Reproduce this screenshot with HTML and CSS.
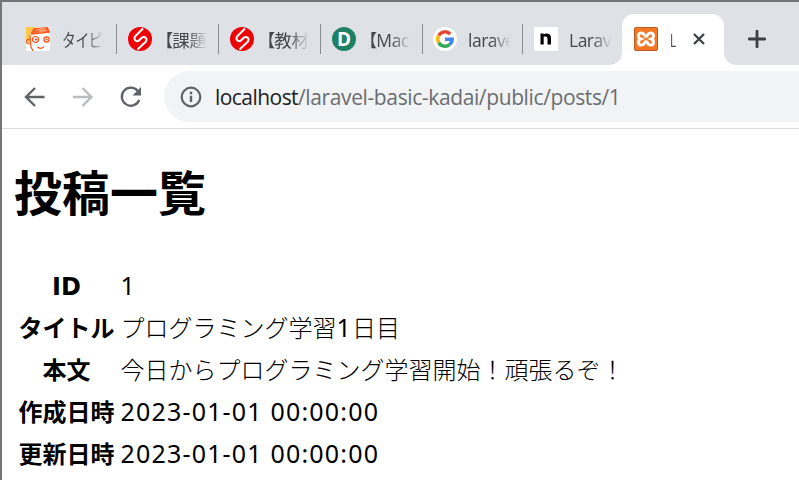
FILE: index.html
```html
<!DOCTYPE html>
<html lang="ja">
<head>
<meta charset="utf-8">
<title>Laravel</title>
<link rel="stylesheet" href="styles.css">
</head>
<body>
<div class="window">
  <div class="tabs">
    <div class="tab">
      <svg class="favicon" viewBox="0 0 24 24"><path fill="#fff" d="M0 0h24v24H0z"/><path fill="#ffc947" d="M0 0h10L4 7v9l-2-1-2 2z"/><path fill="#ff5a1f" d="M8 1 22 0l2 5-17 1-3 1z"/><path d="M10 4c4-3 9-3 10-1s-5 3-7 1M13 4l6-1" fill="none" stroke="#ffd2b8" stroke-width=".8"/><path d="M4 8 5 20l2 4M5 7l19-2M4 13c-3-2-4 1-3 3l3 1" fill="none" stroke="#ff5a1f" stroke-width="1.3"/><g fill="none" stroke="#ff4b14" stroke-width="1.2"><circle cx="9.500" cy="12.500" r="3"/><circle cx="20.500" cy="12.500" r="2.600"/><path d="M11.500 20c2 2 5 1.500 6.500-.5"/></g><g fill="#ff4b14"><circle cx="10" cy="12.500" r="1.100"/><circle cx="20.500" cy="12.500" r="1.100"/></g></svg>
      <span class="title"><span class="kana">タイピ</span></span>
    </div>
    <div class="tab">
      <svg class="favicon" viewBox="0 0 24 24"><circle cx="12" cy="12" r="12" fill="#ee0005"/><path d="M15 1.500 7.500 9c-3 3 1 7 4 4l2-2c3-3 7 1 4 4L9.500 22.500" fill="none" stroke="#fff" stroke-width="2"/></svg>
      <span class="title bracket">【課題</span>
    </div>
    <div class="tab">
      <svg class="favicon" viewBox="0 0 24 24"><circle cx="12" cy="12" r="12" fill="#ee0005"/><path d="M15 1.500 7.500 9c-3 3 1 7 4 4l2-2c3-3 7 1 4 4L9.500 22.500" fill="none" stroke="#fff" stroke-width="2"/></svg>
      <span class="title bracket">【教材</span>
    </div>
    <div class="tab">
      <span class="favicon letter-d">D</span>
      <span class="title bracket">【Mac</span>
    </div>
    <div class="tab">
      <svg class="favicon" viewBox="0 0 24 24"><circle cx="12" cy="12" r="12" fill="#fff"/><g fill="none" stroke-width="3.400"><path stroke="#ea4335" d="M5.700 8.500A7.200 7.200 0 0 1 17.200 7"/><path stroke="#fbbc05" d="M5.700 15.600a7.200 7.200 0 0 1 0-7.200"/><path stroke="#34a853" d="M16.700 17.500a7.200 7.200 0 0 1-11-1.900"/><path stroke="#4285f4" d="M12 12.200h7.200q0 3.300-2.500 5.300"/></g></svg>
      <span class="title latin">larave</span>
    </div>
    <div class="tab last">
      <svg class="favicon" viewBox="0 0 24 24"><path fill="#fff" d="M0 0h24v24H0z"/><path fill="#000" d="M6.500 6.500h3v1q1.500-1 3-1 4.500 0 4.500 4.500v6.500h-3.500v-6q0-2-2-2h-1.800v8H6.500z"/></svg>
      <span class="title latin">Larav</span>
    </div>
    <div class="tab active">
      <svg class="favicon" viewBox="0 0 24 24"><rect x=".5" y=".5" width="23" height="23" rx="1.500" fill="#f47723" stroke="#bd5a21"/><path d="M9 6.300c-6-2-5 5-2.500 5.700C4 13 3 19.700 9 17.700c2-.8.5-3 3-3s1 2.200 3 3c6 2 5-4.700 2.500-5.700 2.500-.7 3.500-7.700-2.500-5.700-2 .8-.5 3-3 3s-1-2.200-3-3z" fill="none" stroke="#fff" stroke-width="3"/></svg>
      <span class="title short">L</span>
      <svg class="close" viewBox="0 0 12 12"><path d="m1 1 10 10M11 1 1 11" stroke="#3c4043" stroke-width="2.300"/></svg>
    </div>
    <svg class="plus" viewBox="0 0 18 18"><path d="M9 1.200v15.600M1.200 9h15.600" stroke="#3c4043" stroke-width="2.800" stroke-linecap="round"/></svg>
  </div>
  <div class="toolbar">
    <svg class="nav" viewBox="0 0 24 24"><path d="M21.500 12H3M12 3l-9 9 9 9" fill="none" stroke="#5f6368" stroke-width="2.400"/></svg>
    <svg class="nav" viewBox="0 0 24 24"><path d="M2 12h18.500M11.500 3l9 9-9 9" fill="none" stroke="#babcbe" stroke-width="2.400"/></svg>
    <svg class="nav" viewBox="0 0 24 24"><path d="M18.800 6A9 9 0 1 0 20.200 15" fill="none" stroke="#5f6368" stroke-width="2.300"/><path fill="#5f6368" d="M22 2v8.500h-8.500z"/></svg>
    <div class="address">
      <svg class="info" viewBox="0 0 22 22"><circle cx="11" cy="11" r="9.300" fill="none" stroke="#5f6368" stroke-width="2.200"/><path d="M11 9.800v6.200M11 5.800v2.400" stroke="#5f6368" stroke-width="2.400"/></svg>
      <span class="url"><span class="host">localhost</span><span class="path">/laravel-basic-kadai/public/posts/1</span></span>
    </div>
  </div>
  <main>
    <h1>投稿一覧</h1>
    <table>
      <tr><th>ID</th><td class="number">1</td></tr>
      <tr><th>タイトル</th><td>プログラミング学習<span class="number">1</span>日目</td></tr>
      <tr><th>本文</th><td>今日からプログラミング学習開始！頑張るぞ！</td></tr>
      <tr><th>作成日時</th><td class="number">2023-01-01 00:00:00</td></tr>
      <tr><th>更新日時</th><td class="number">2023-01-01 00:00:00</td></tr>
    </table>
  </main>
</div>
</body>
</html>
```
FILE: styles.css
```css
* { box-sizing: border-box; }
html, body { margin: 0; height: 100%; overflow: hidden; }
body { background: #fff; color: #000; }
svg { display: block; flex: none; }

.window {
  height: 480px;
  border-top: 2px solid #757575;
  border-left: 2px solid #757575;
}

.tabs {
  height: 63px;
  padding-left: 13px;
  display: flex;
  align-items: flex-end;
  background: #dee1e6;
}
.tab {
  flex: none;
  width: 102px;
  height: 51px;
  padding: 0 0 1px 11px;
  display: flex;
  align-items: center;
  position: relative;
}
.tab:not(.active):not(.last)::after {
  content: "";
  position: absolute;
  right: 0;
  top: 10px;
  width: 1.5px;
  height: 30px;
  background: #8a8c90;
}
.tab:nth-child(5) { width: 100px; padding-left: 10px; }
.tab.last { width: 99px; padding-left: 11px; }
.favicon { width: 24px; height: 24px; flex: none; }
.letter-d {
  border-radius: 50%;
  background: #1f8065;
  color: #fff;
  font: bold 19px/24px "Open Sans", sans-serif;
  text-align: center;
}
.title {
  width: 43px;
  margin-left: 12px;
  white-space: nowrap;
  font: 18px/26px "Open Sans", "Noto Sans CJK JP", sans-serif;
  letter-spacing: -0.4px;
  color: #45484c;
  padding-top: 1px;
  -webkit-mask-image: linear-gradient(90deg, #000 55%, transparent);
  mask-image: linear-gradient(90deg, #000 55%, transparent);
}
.latin {
  margin-left: 11px;
  font-size: 17.5px;
  letter-spacing: -0.5px;
}
.kana {
  display: inline-block;
  transform: scaleX(0.76);
  transform-origin: 0 0;
}
.bracket {
  font-feature-settings: "palt";
  font-size: 17.5px;
}
.short {
  width: 9px;
  margin-left: 12px;
  transform: scaleX(0.65);
  transform-origin: 0 0;
  -webkit-mask-image: none;
  mask-image: none;
}
.active {
  width: 102px;
  padding-left: 12px;
  background: #fff;
  border-radius: 12px 12px 0 0;
}
.active::before, .active::after {
  content: "";
  position: absolute;
  bottom: 0;
  width: 12px;
  height: 12px;
}
.active::before {
  left: -12px;
  background: radial-gradient(circle at 0 0, transparent 11.5px, #fff 12px);
}
.active::after {
  right: -12px;
  background: radial-gradient(circle at 100% 0, transparent 11.5px, #fff 12px);
}
.close { width: 12px; height: 12px; margin-left: 14px; }
.plus { width: 18px; height: 18px; margin: 0 0 17px 24px; }

.toolbar {
  height: 64px;
  padding-left: 21px;
  display: flex;
  align-items: center;
  gap: 24px;
  border-bottom: 1px solid #dadce0;
}
.nav { width: 24px; height: 24px; }
.address {
  flex: 1;
  height: 51px;
  margin-left: -3px;
  padding-left: 16px;
  display: flex;
  align-items: center;
  background: #f1f3f4;
  border-radius: 26px 0 0 26px;
}
.info { width: 22px; height: 22px; }
.url {
  margin-left: 13px;
  white-space: nowrap;
  font: 21px/30px "Open Sans", sans-serif;
  color: #6a6d71;
}
.host { color: #202124; letter-spacing: -0.55px; }
.path { letter-spacing: -0.38px; }

main {
  padding: 29px 0 0 12px;
  font-family: "DejaVu Sans", "Noto Sans CJK JP", sans-serif;
}
h1 {
  margin: 0 0 42px;
  font: bold 48px/64px "Noto Sans CJK JP", sans-serif;
}
table { border-spacing: 3px; }
th, td {
  height: 39px;
  padding: 0 1.5px;
  font-size: 24px;
  line-height: 38px;
  white-space: nowrap;
}
td { font-weight: 300; }
.number {
  font-family: "Noto Sans", sans-serif;
  font-weight: 400;
  font-size: 25px;
  line-height: 34px;
  letter-spacing: 1.18px;
}
td.number { padding-bottom: 4px; }
```
